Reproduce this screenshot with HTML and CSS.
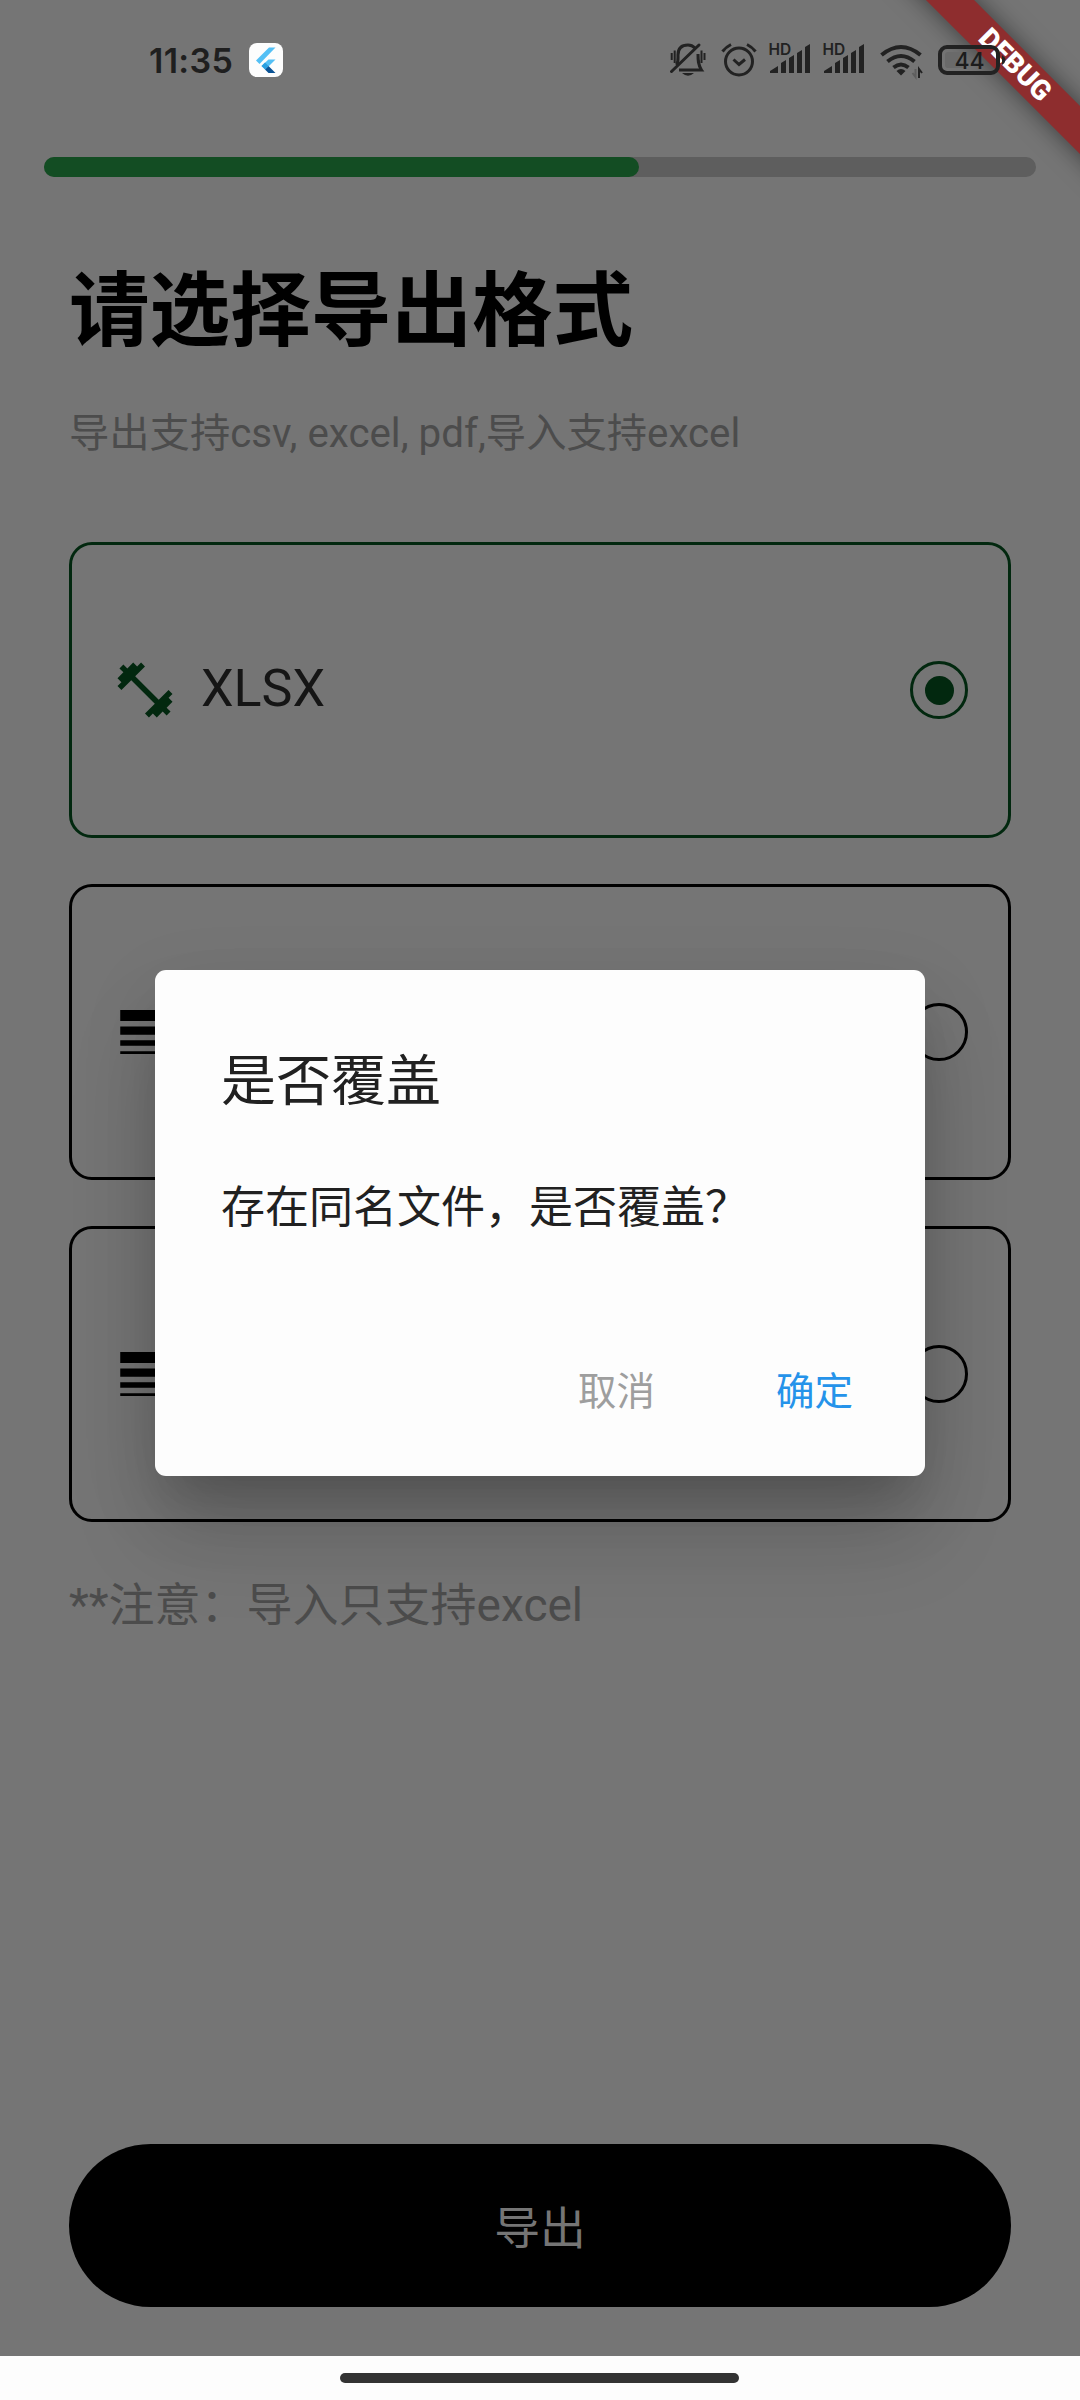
FILE: index.html
```
<!DOCTYPE html>
<html lang="zh-CN">
<head>
<meta charset="utf-8">
<title>导出</title>
<link rel="stylesheet" href="styles.css">
</head>
<body>
<div class="screen">
  <div class="page">
    <header class="status">
      <span class="clock">11:35</span>
      <svg class="app-badge" width="34" height="34" viewBox="0 0 34 34">
        <rect width="34" height="34" rx="8" fill="#fdfdfd"/>
        <path d="M7 17.500 20 4.500H26.500L10.500 21z" fill="#54c0f5"/>
        <path d="M12.500 23 19.500 16.500H26.500L16.500 26.500z" fill="#54c0f5"/>
        <path d="M16 26.500 19.500 23 26.500 30H19.500z" fill="#0b5394"/>
        <path d="M12.500 23 16 19.500 19.500 23 16 26.500z" fill="#2a9fe0"/>
      </svg>
      <span class="spacer"></span>
      <svg class="status-icons" width="370" height="40" viewBox="0 0 370 40" fill="none" stroke="#222" stroke-width="3">
        <g>
          <path d="M9.500 25C11.500 22 11 19 11 15C11 8 15 5 21 5C24 5 26 6 28 8M31 14C31 20 31 25 34.500 30H12" />
          <path d="M4.500 31.500 32 5" stroke-linecap="round"/>
          <path d="M15 33H27Q21 38.500 15 33z" fill="#222" stroke="none"/>
          <path d="M4.700 13V20M7.700 10.500V23M34.500 10.500V23M37.500 13V20" stroke-width="2"/>
        </g>
        <g>
          <circle cx="72" cy="21.500" r="13.500"/>
          <path d="M66.500 19.500 72 24.500 78 19.500"/>
          <path d="M55.500 11.500Q59 7 64 4.500M88.500 11.500Q85 7 80 4.500"/>
        </g>
        <g fill="#222" stroke="none">
          <text class="hd" x="101.500" y="14.500">HD</text>
          <path id="bars" d="M103 33V31L111 26V33zM114 33V23L119 20V33zM122 33V18L127 15V33zM130 33V13L135 10V33zM138 33V7L143 4V33z"/>
          <text class="hd" x="155.500" y="14.500">HD</text>
          <use href="#bars" x="54"/>
        </g>
      </svg>
    </header>

    <div class="progress"><div class="progress-fill"></div></div>

    <main class="content">
      <h1 class="title">请选择导出格式</h1>
      <p class="subtitle">导出支持csv, excel, pdf,导入支持excel</p>
      <div class="options">
        <div class="option selected">
          <svg class="option-icon" viewBox="0 0 24 24"><path d="M20.570 14.860 22 13.430 20.570 12 17 15.570 8.430 7 12 3.430 10.570 2 9.140 3.430 7.710 2 5.570 4.140 4.140 2.710 2.710 4.140l1.430 1.430L2 7.710l1.430 1.430L2 10.570 3.430 12 7 8.430 15.570 17 12 20.570 13.430 22l1.430-1.430L16.290 22l2.140-2.140 1.430 1.430 1.430-1.430-1.430-1.430L22 16.290z"/></svg>
          <span class="option-label">XLSX</span>
          <span class="radio"></span>
        </div>
        <div class="option">
          <svg class="option-icon" viewBox="0 0 24 24"><path d="M3 17h18v-2H3zm0 3h18v-1H3zm0-7h18v-3H3zm0-9v4h18V4z"/></svg>
          <span class="option-label"></span>
          <span class="radio"></span>
        </div>
        <div class="option">
          <svg class="option-icon" viewBox="0 0 24 24"><path d="M3 17h18v-2H3zm0 3h18v-1H3zm0-7h18v-3H3zm0-9v4h18V4z"/></svg>
          <span class="option-label"></span>
          <span class="radio"></span>
        </div>
      </div>
      <p class="note">**注意：导入只支持excel</p>
      <button class="export">导出</button>
    </main>
  </div>

  <footer class="nav"><span class="handle"></span></footer>

  <section class="dialog">
    <h2 class="dialog-title">是否覆盖</h2>
    <p class="dialog-text">存在同名文件，是否覆盖？</p>
    <div class="actions"><span class="cancel">取消</span><span class="confirm">确定</span></div>
  </section>

  <div class="banner-clip"><div class="banner">DEBUG</div></div>
  <svg class="indicators" width="150" height="40" viewBox="0 0 150 40" fill="none" stroke="#222">
    <g stroke-width="4">
      <path d="M2.500 14Q22 -2 41.500 14"/>
      <path d="M8.500 20.500Q22 9.500 35.500 20.500"/>
      <path d="M14.500 26.500Q22 20.500 29.500 26.500"/>
      <path d="M22 34.500 17.500 30Q22 26 26.500 30z" fill="#222" stroke="none"/>
    </g>
    <path d="M40 37V28L43 32" stroke-width="2"/>
    <path d="M36.500 28V36L33.500 32" stroke="#5e5e5e" stroke-width="2"/>
    <rect x="61" y="6" width="58" height="26" rx="7" stroke-width="4"/>
    <rect x="66" y="11" width="21" height="16" rx="3" fill="#6a6a6a" stroke="none"/>
    <path d="M123 14Q130 19 123 24z" fill="#222" stroke="none"/>
    <text class="charge" x="75.500" y="27.500">44</text>
  </svg>
</div>
</body>
</html>
```
FILE: styles.css
```
* { box-sizing: border-box; }

body {
  margin: 0;
  font-family: Roboto, "Noto Sans CJK SC", sans-serif;
}

h1, h2, p { margin: 0; font-weight: 400; white-space: nowrap; }

.screen {
  position: relative;
  width: 1080px;
  height: 2400px;
  overflow: hidden;
  display: flex;
  flex-direction: column;
}

.page {
  flex: 1;
  background: #757575;
  display: flex;
  flex-direction: column;
}

.status {
  height: 157px;
  padding: 40px 40px 0 149px;
  display: flex;
  align-items: flex-start;
}

.clock {
  width: 100px;
  margin-top: 3px;
  font: 600 34px/36px Inter, sans-serif;
  letter-spacing: .3px;
  color: #1f1f1f;
}

.app-badge { margin-top: 3px; }
.spacer { flex: 1; }
.status-icons { margin-right: 3px; width: 370px; }
.hd { font: 600 15.500px Inter, sans-serif; }

.progress {
  height: 20px;
  margin: 0 44px;
  border-radius: 10px;
  background: #5e5e5e;
}

.progress-fill {
  width: 60%;
  height: 100%;
  border-radius: 10px;
  background: #134d23;
}

.content {
  flex: 1;
  padding: 76px 69px 49px;
  display: flex;
  flex-direction: column;
}

.title {
  height: 117px;
  font-size: 80.600px;
  line-height: 117px;
  font-weight: 700;
  color: #000;
}

.subtitle {
  height: 58px;
  margin-top: 35px;
  font-size: 40.300px;
  line-height: 58px;
  color: #4c4c4c;
}

.options {
  margin-top: 79px;
  display: flex;
  flex-direction: column;
  gap: 46px;
}

.option {
  height: 296px;
  padding: 0 40px;
  border: 3px solid #000;
  border-radius: 23px;
  display: flex;
  align-items: center;
}

.option.selected { border-color: #02280f; }
.option-icon { width: 66px; height: 66px; }
.selected .option-icon { fill: #02280f; }

.option-label {
  flex: 1;
  margin: -2px 0 0 23px;
  font-size: 52px;
  line-height: 60px;
  color: #151515;
}

.radio {
  width: 58px;
  height: 58px;
  border: 3px solid #000;
  border-radius: 50%;
  display: grid;
  place-items: center;
}

.selected .radio { border-color: #02280f; }

.selected .radio::after {
  content: "";
  width: 29px;
  height: 29px;
  border-radius: 50%;
  background: #02280f;
}

.note {
  margin-top: 50px;
  font-size: 46px;
  line-height: 66px;
  color: #4c4c4c;
}

.export {
  height: 163px;
  margin-top: auto;
  padding: 8px 0 0;
  border: 0;
  border-radius: 82px;
  background: #000;
  color: #757575;
  font: 400 45.800px/66px Roboto, "Noto Sans CJK SC", sans-serif;
}

.nav {
  height: 44px;
  padding: 17px 1px 0 0;
  background: #fdfdfd;
  display: flex;
  justify-content: center;
}

.handle {
  width: 399px;
  height: 10px;
  border-radius: 5px;
  background: #333;
}

.dialog {
  position: absolute;
  left: 155px;
  top: 970px;
  width: 770px;
  height: 506px;
  padding: 66px 66px 0;
  border-radius: 11px;
  background: #fdfdfd;
  color: #212121;
  font-family: "Noto Sans CJK SC", sans-serif;
  box-shadow: 0 30px 41px -19px rgba(0, 0, 0, .14), 0 60px 90px 0 rgba(0, 0, 0, .14), 0 25px 80px 0 rgba(0, 0, 0, .1);
}

.dialog-title { font-size: 55px; line-height: 80px; }
.dialog-text { margin-top: 56px; font-size: 44px; line-height: 64px; }

.actions {
  margin-top: 124px;
  padding-right: 6px;
  display: flex;
  justify-content: flex-end;
  gap: 121px;
  font-size: 38.500px;
  line-height: 56px;
}

.cancel { color: #9e9e9e; }
.confirm { color: #2593ea; }

.banner-clip {
  position: absolute;
  right: 0;
  top: 0;
  width: 220px;
  height: 220px;
  overflow: hidden;
}

.banner {
  position: absolute;
  left: 5px;
  top: 48px;
  width: 300px;
  height: 34px;
  transform: rotate(45deg);
  background: #8e2d2e;
  box-shadow: 0 0 24px rgba(0, 0, 0, .5);
  color: #fff;
  text-align: center;
  font-size: 28px;
  line-height: 34px;
  font-weight: 900;
}

.indicators {
  position: absolute;
  left: 879px;
  top: 41px;
}

.charge { font: 500 23px Inter, sans-serif; fill: #1c1c1c; stroke: none; }
```
